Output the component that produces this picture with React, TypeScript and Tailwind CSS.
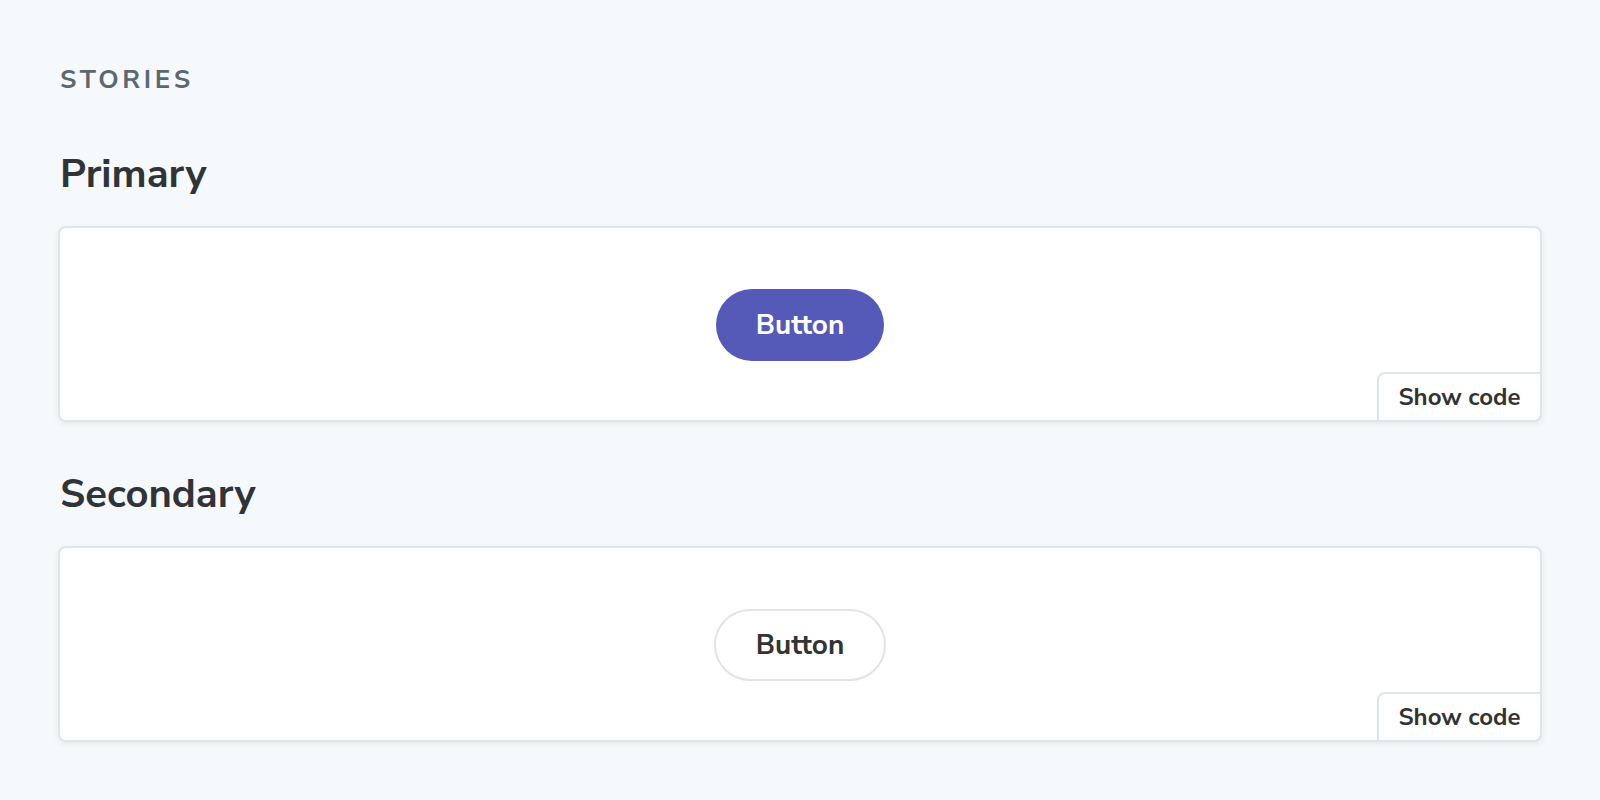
import React from 'react';

function Story({ title, primary }: { title: string; primary?: boolean }) {
  return (
    <section>
      <h3 className="text-[40px] font-bold leading-[48px] text-[#2e3438] pl-[2px]">{title}</h3>
      <div className="relative mt-[28px] h-[196px] rounded-[8px] border-2 border-[#dde4eb] bg-white shadow-[0_2px_6px_rgba(0,0,0,0.07)] flex items-center justify-center">
        {primary ? (
          <button className="mt-[2px] h-[72px] px-[40px] rounded-full bg-[#555ab9] text-white text-[28px] font-bold">
            Button
          </button>
        ) : (
          <button className="mt-[2px] h-[72px] px-[40px] rounded-full border-2 border-[#e3e3e3] bg-white text-[#333333] text-[28px] font-bold">
            Button
          </button>
        )}
        <button className="absolute right-[-2px] bottom-[-2px] h-[50px] w-[165px] rounded-tl-[8px] rounded-br-[8px] border-2 border-[#dde4eb] bg-white text-[24px] font-bold text-[#333333]">
          Show code
        </button>
      </div>
    </section>
  );
}

export default function App() {
  return (
    <div className="min-h-screen w-full bg-[#f6f9fc] pl-[58px] pr-[58px] pt-[65px] font-['Nunito_Sans','Lato','Noto_Sans',sans-serif]">
      <div className="w-full">
        <h2 className="pl-[2px] text-[26px] font-bold uppercase leading-[30px] tracking-[0.14em] text-[#5c6870]">
          Stories
        </h2>
        <div className="mt-[55px] flex flex-col gap-[48px]">
          <Story title="Primary" primary />
          <Story title="Secondary" />
        </div>
      </div>
    </div>
  );
}
